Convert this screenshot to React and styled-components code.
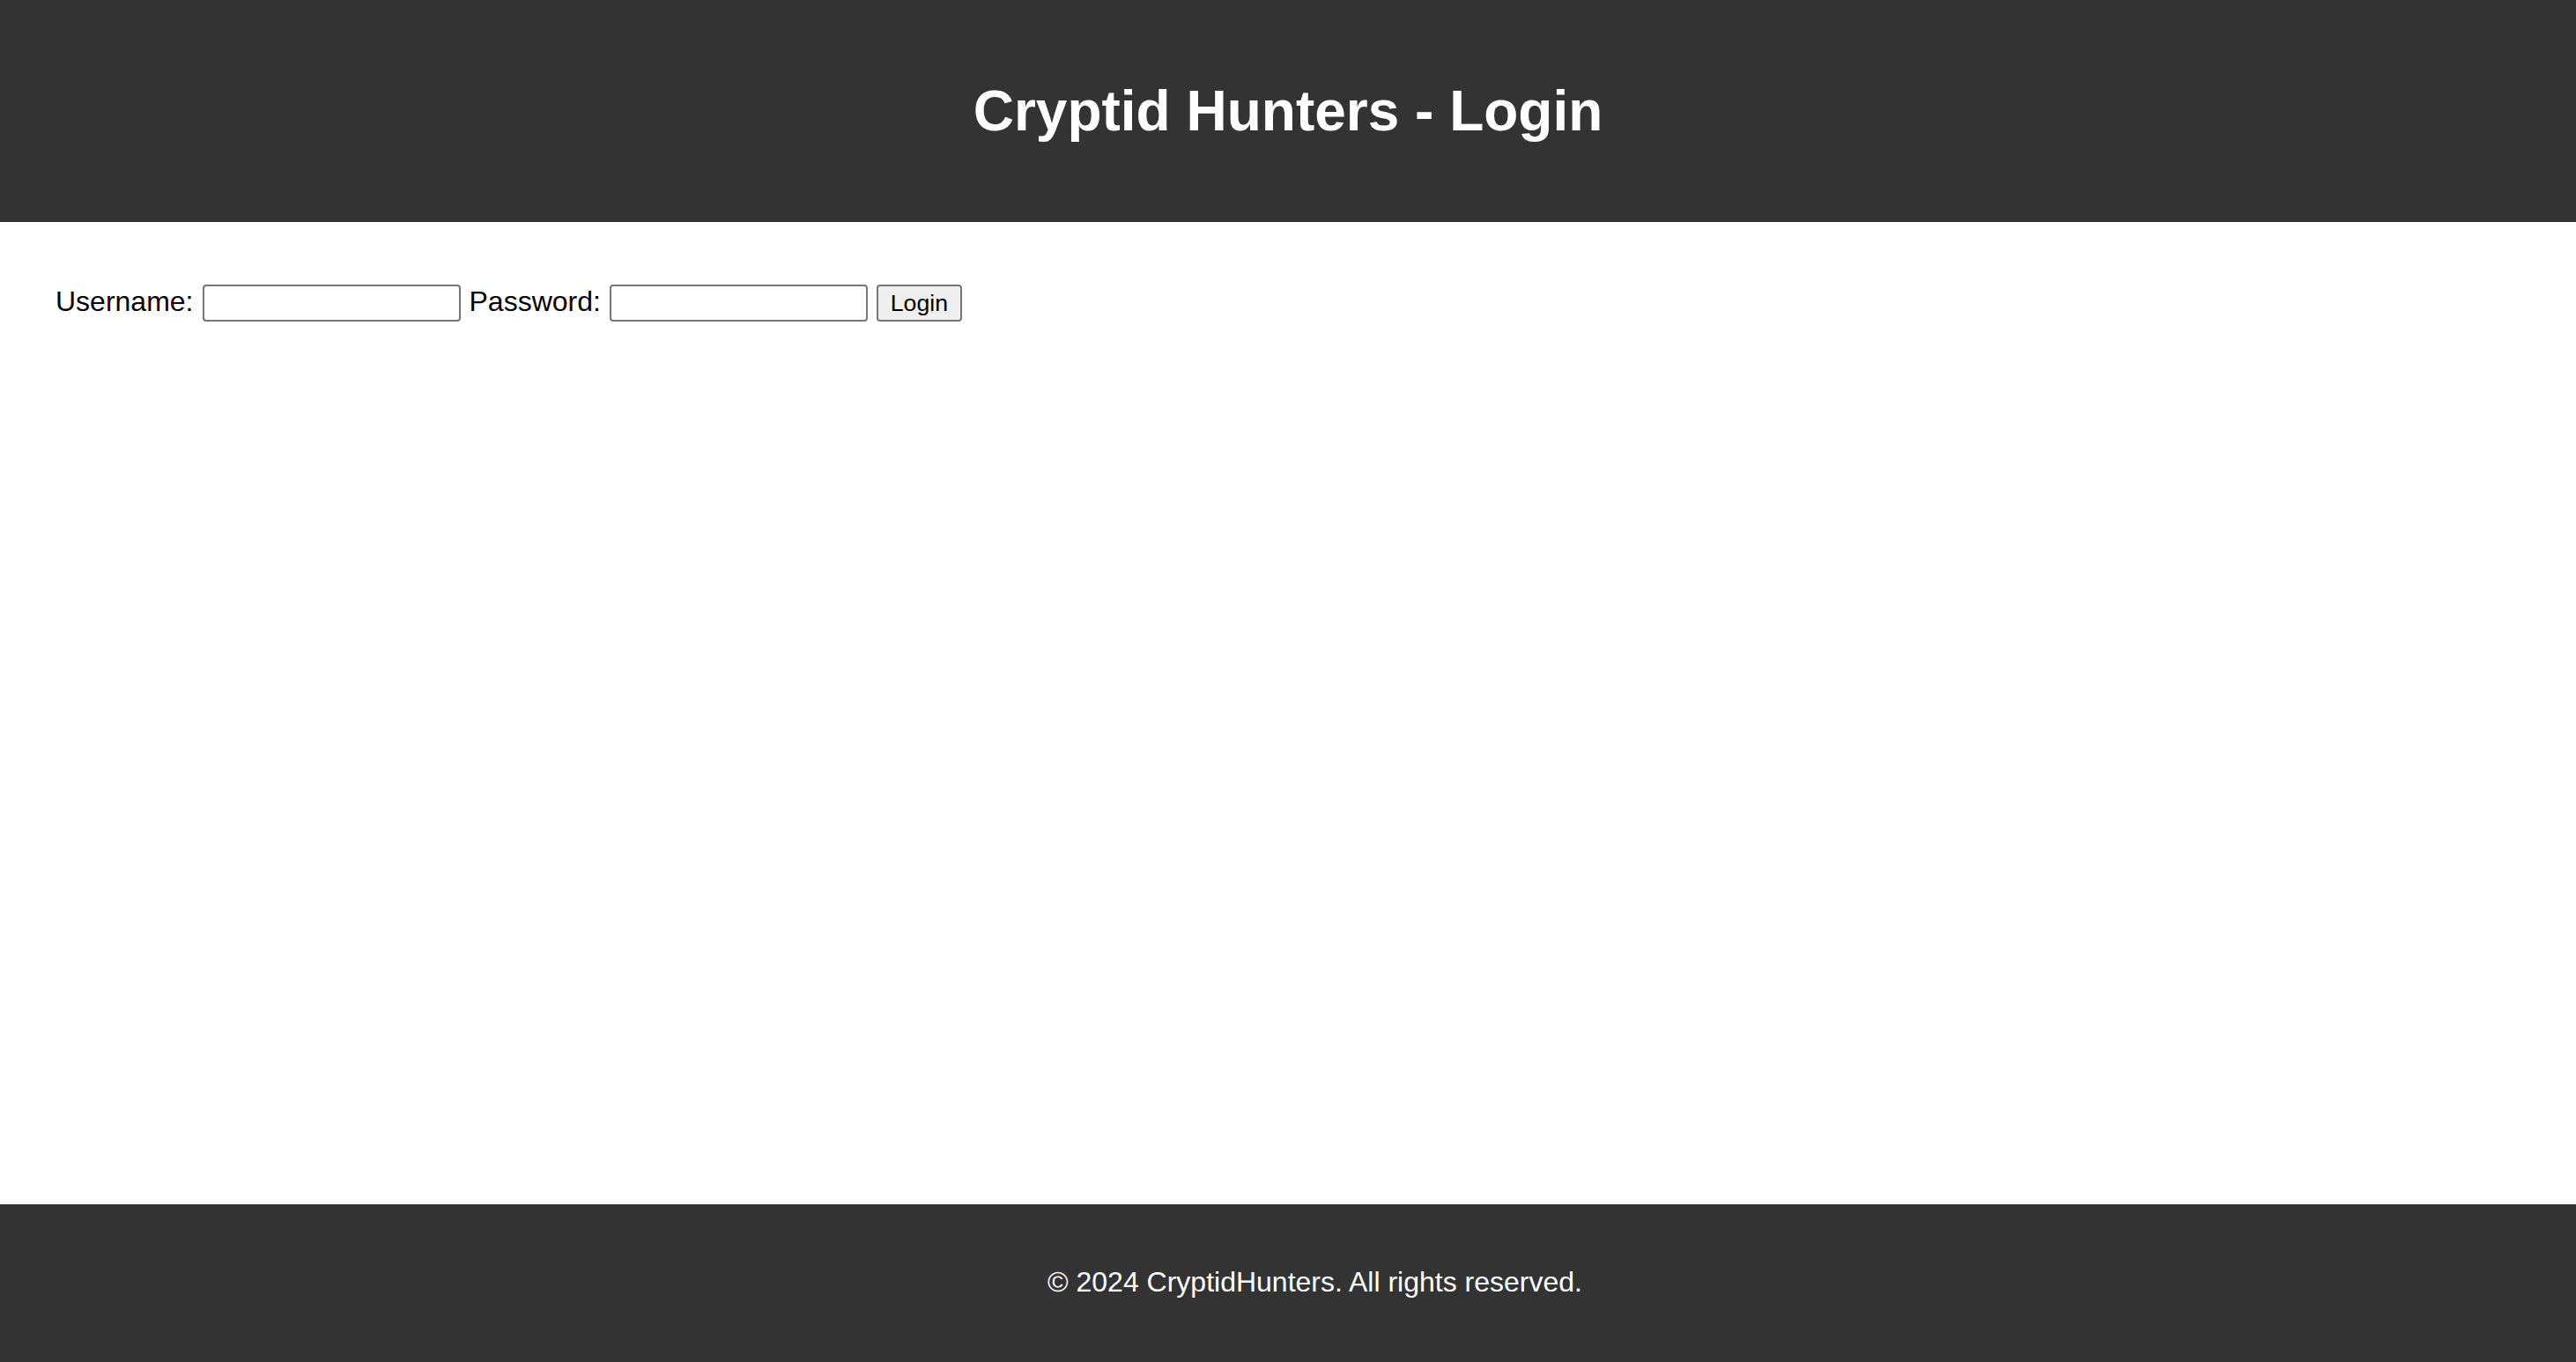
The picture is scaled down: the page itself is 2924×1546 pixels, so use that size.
import React from 'react';
import styled, { createGlobalStyle } from 'styled-components';

const GlobalStyle = createGlobalStyle`
  html, body {
    margin: 0;
    padding: 0;
  }
  body {
    font-family: "Liberation Sans", Arial, sans-serif;
    font-size: 32px;
    color: #000;
    background: #fff;
  }
  * {
    box-sizing: border-box;
  }
`;

const Page = styled.div`
  display: flex;
  flex-direction: column;
  min-height: 100vh;
`;

const Header = styled.header`
  background-color: #333;
  color: #fff;
  padding: 89px 0;
  text-align: center;
`;

const Title = styled.h1`
  margin: 0;
  font-size: 64px;
  line-height: 74px;
  font-weight: bold;
`;

const Main = styled.main`
  flex: 1;
  padding: 71px 63px 0;
`;

const LoginForm = styled.form`
  display: flex;
  align-items: baseline;
  gap: 10px;
`;

const Label = styled.label`
  font-size: 32px;
  line-height: 37px;
`;

const TextInput = styled.input`
  width: 293px;
  height: 42px;
  padding: 2px 4px;
  border: 2px solid #767676;
  border-radius: 4px;
  font-family: "Liberation Sans", Arial, sans-serif;
  font-size: 26.67px;
  background: #fff;
`;

const Button = styled.button`
  width: 97px;
  height: 42px;
  padding: 2px 12px;
  border: 2px solid #767676;
  border-radius: 4px;
  background-color: #efefef;
  font-family: "Liberation Sans", Arial, sans-serif;
  font-size: 26.67px;
  color: #000;
`;

const Footer = styled.footer`
  background-color: #333;
  color: #fff;
  text-align: center;
  padding: 70px 0 72px 61px;
`;

const FooterText = styled.p`
  margin: 0;
  font-size: 32px;
  line-height: 37px;
`;

const App = () => (
  <Page>
    <GlobalStyle />
    <Header>
      <Title>Cryptid Hunters - Login</Title>
    </Header>
    <Main>
      <LoginForm onSubmit={e => e.preventDefault()}>
        <Label htmlFor="username">Username:</Label>
        <TextInput id="username" type="text" />
        <Label htmlFor="password">Password:</Label>
        <TextInput id="password" type="password" />
        <Button type="submit">Login</Button>
      </LoginForm>
    </Main>
    <Footer>
      <FooterText>© 2024 CryptidHunters. All rights reserved.</FooterText>
    </Footer>
  </Page>
);

export default App;
